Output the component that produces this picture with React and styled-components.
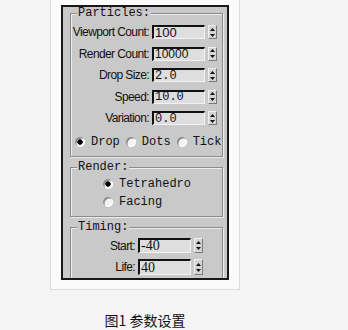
import React from 'react';
import styled, { createGlobalStyle } from 'styled-components';

const GlobalStyle = createGlobalStyle`
  html, body {
    margin: 0;
    padding: 0;
    background: #f5f5f5;
  }
`;

const Page = styled.div`
  width: 348px;
  height: 330px;
  padding-left: 50px;
  box-sizing: border-box;
  display: flex;
  flex-direction: column;
  align-items: flex-start;
`;

const Column = styled.div`
  width: 190px;
  display: flex;
  flex-direction: column;
  align-items: center;
`;

const Frame = styled.div`
  width: 190px;
  height: 290px;
  box-sizing: border-box;
  border: 1px solid #dcdcdc;
  border-top: none;
  background: #fbfbfb;
  padding: 5px 0 0 10px;
`;

const Panel = styled.div`
  width: 168px;
  height: 275px;
  box-sizing: border-box;
  border: 2px solid #181818;
  background: #c9c9c9;
  overflow: hidden;
  padding: 6px 4px 0 7px;
  display: flex;
  flex-direction: column;
  gap: 10px;
`;

const Group = styled.div`
  position: relative;
  width: 153px;
  box-sizing: border-box;
  border: 1px solid #8c8c8c;
  box-shadow: inset 1px 1px 0 #ececec, 1px 1px 0 #ececec;
  padding: ${({ $pad }) => $pad};
  display: flex;
  flex-direction: column;
  gap: ${({ $gap }) => $gap || '6px'};
`;

const Title = styled.span`
  position: absolute;
  top: -8px;
  left: 6px;
  padding: 0 1px;
  background: #c9c9c9;
  font-family: "Liberation Mono", monospace;
  font-size: 12px;
  line-height: 14px;
  color: #111;
`;

const Row = styled.div`
  display: grid;
  grid-template-columns: ${({ $label }) => $label}px ${({ $input }) => $input}px 9px;
  column-gap: 3px;
  align-items: center;
  height: ${({ $h }) => $h || 14}px;
`;

const Label = styled.span`
  text-align: right;
  white-space: nowrap;
  font-family: "Liberation Sans", Arial, sans-serif;
  font-size: 12px;
  letter-spacing: -0.6px;
  color: #111;
`;

const Input = styled.div`
  height: 100%;
  box-sizing: border-box;
  border-top: 2px solid #111;
  border-left: 2px solid #111;
  border-right: 1px solid #f2f2f2;
  border-bottom: 1px solid #f2f2f2;
  background: #dedede;
  padding-left: 1px;
  display: flex;
  align-items: center;
  font-family: ${({ $font }) =>
    $font === 'mono'
      ? '"Liberation Mono", monospace'
      : $font === 'serif'
      ? '"Liberation Serif", serif'
      : '"Liberation Sans", Arial, sans-serif'};
  font-size: ${({ $size }) => $size || 12}px;
  color: #111;
  line-height: 1;
  overflow: hidden;
`;

const SpinBox = styled.div`
  height: 100%;
  box-sizing: border-box;
  border-top: 1px solid #f0f0f0;
  border-left: 1px solid #f0f0f0;
  border-right: 1px solid #7a7a7a;
  border-bottom: 1px solid #7a7a7a;
  background: #d4d4d4;
  display: flex;
  align-items: center;
  justify-content: center;
`;

const Rows = styled.div`
  display: flex;
  flex-direction: column;
  gap: 7.5px;
`;

const RadioRow = styled.div`
  display: flex;
  align-items: center;
  height: 12px;
  margin-top: ${({ $top }) => $top || 0}px;
  padding-left: ${({ $left }) => $left || 0}px;
`;

const RadioItem = styled.label`
  display: flex;
  align-items: center;
  gap: 6px;
  margin-right: 6px;
  font-family: "Liberation Mono", monospace;
  font-size: 12px;
  color: #111;
  white-space: nowrap;
`;

const Dot = styled.span`
  width: 10px;
  height: 10px;
  flex: none;
  border-radius: 50%;
  background: ${({ $on }) =>
    $on
      ? 'radial-gradient(circle, #000 0 2.4px, #f4f4f4 3px)'
      : '#f4f4f4'};
  box-shadow: inset 1.5px 1.5px 0 #8a8a8a, inset -1px -1px 0 #ffffff;
`;

const Caption = styled.div`
  margin-top: 20px;
  font-family: "Noto Sans CJK SC", "Liberation Sans", sans-serif;
  font-size: 14px;
  line-height: 20px;
  color: #111;
`;

const Spinner = () => (
  <SpinBox>
    <svg width="7" height="11" viewBox="0 0 7 11">
      <path d="M3.5 1 L6 4 L1 4 Z" fill="#111" />
      <path d="M1 7 L6 7 L3.5 10 Z" fill="#111" />
    </svg>
  </SpinBox>
);

const Field = ({ label, value, font, size, labelW, inputW, h }) => (
  <Row $label={labelW} $input={inputW} $h={h}>
    <Label>{label}</Label>
    <Input $font={font} $size={size}>{value}</Input>
    <Spinner />
  </Row>
);

const Radio = ({ on, children }) => (
  <RadioItem>
    <Dot $on={on} />
    {children}
  </RadioItem>
);

const particles = [
  { label: 'Viewport Count:', value: '100', size: 13 },
  { label: 'Render Count:', value: '10000' },
  { label: 'Drop Size:', value: '2.0', font: 'mono' },
  { label: 'Speed:', value: '10.0', font: 'mono' },
  { label: 'Variation:', value: '0.0', font: 'mono' },
];

export default function App() {
  return (
    <>
      <GlobalStyle />
      <Page>
        <Column>
          <Frame>
            <Panel>
              <Group $pad="11px 0 8px 0" $gap="0">
                <Title>Particles:</Title>
                <Rows>
                  {particles.map((p) => (
                    <Field key={p.label} {...p} labelW={78} inputW={53} />
                  ))}
                </Rows>
                <RadioRow $top={11} $left={4}>
                  <Radio on>Drop</Radio>
                  <Radio>Dots</Radio>
                  <Radio>Tick</Radio>
                </RadioRow>
              </Group>
              <Group $pad="10px 0 8px 0" $gap="6px">
                <Title>Render:</Title>
                <RadioRow $left={32}>
                  <Radio on>Tetrahedro</Radio>
                </RadioRow>
                <RadioRow $left={32}>
                  <Radio>Facing</Radio>
                </RadioRow>
              </Group>
              <Group $pad="10px 0 8px 0" $gap="6px">
                <Title>Timing:</Title>
                <Field label="Start:" value="-40" font="serif" size={14} labelW={64} inputW={53} h={15} />
                <Field label="Life:" value="40" font="serif" size={14} labelW={64} inputW={53} h={16} />
              </Group>
            </Panel>
          </Frame>
          <Caption>图1 参数设置</Caption>
        </Column>
      </Page>
    </>
  );
}
